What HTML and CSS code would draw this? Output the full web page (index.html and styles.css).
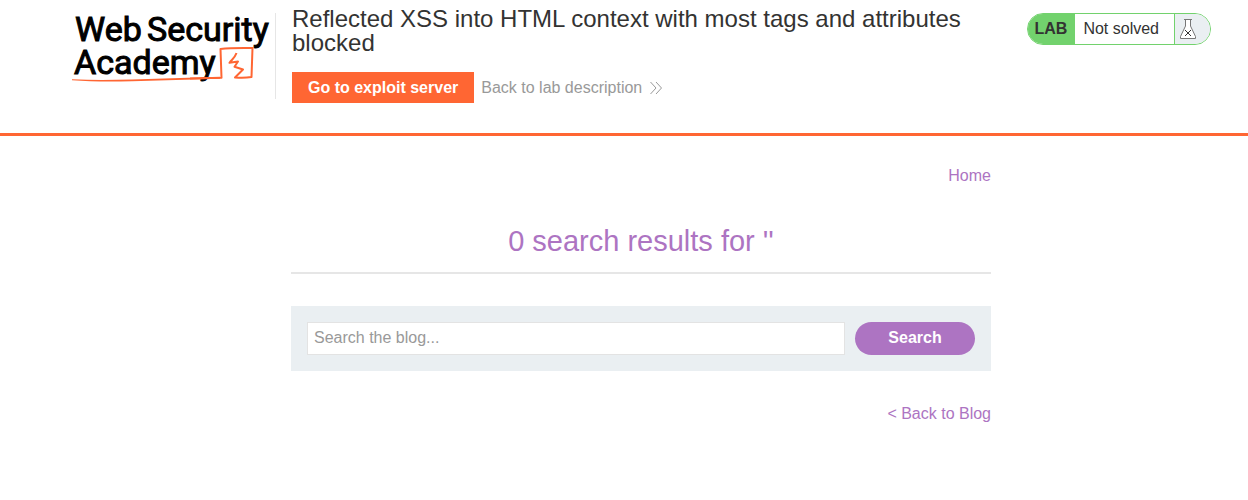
FILE: index.html
```html
<!DOCTYPE html>
<html lang="en">
<head>
<meta charset="utf-8">
<meta name="viewport" content="width=device-width, initial-scale=1">
<title>Reflected XSS into HTML context with most tags and attributes blocked</title>
<link rel="stylesheet" href="styles.css">
</head>
<body>
<header class="lab-header">
  <a class="logo" href="#" aria-label="Web Security Academy">
    <svg class="logo-art" viewBox="0 0 204 86" aria-hidden="true">
      <g class="logo-text">
        <text x="3" y="28">Web</text>
        <text x="75" y="28">Security</text>
        <text x="2" y="61">Academy</text>
      </g>
      <path class="logo-underline" d="M0 66.200C20 67.200 40 67 60 66.400L148 63.800V65.800L60 68.200C38 68.600 18 68.600 0 67.200Z"/>
      <path class="logo-mark" d="M118 65.500L149.500 64.700L148.500 36C160 34.800 170 35.200 180.500 35L179.500 64C174 65 169 65 163 64.500L171 56.500L162.500 53.800L166 48.500L157.500 49.800C160 46.500 163 44.500 164.500 40"/>
    </svg>
  </a>
  <div class="title-area">
    <h1 class="lab-title">Reflected XSS into HTML context with most tags and attributes blocked</h1>
    <div class="lab-links">
      <button class="exploit-button" type="button">Go to exploit server</button>
      <a class="back-link" href="#">Back to lab description
        <svg class="chevrons" viewBox="0 0 12 14" aria-hidden="true"><path d="M0.500 1L6 7L0.500 13M6 1L11.500 7L6 13"/></svg>
      </a>
    </div>
  </div>
  <div class="lab-status">
    <span class="status-tag">LAB</span>
    <span class="status-text">Not solved</span>
    <span class="status-icon">
      <svg class="flask" viewBox="0 0 18 22" aria-hidden="true">
        <path class="flask-body" d="M5 1.500H13M6.500 1.500V8L1.500 18.500V20.500H16.500V18.500L11.500 8V1.500"/>
        <path class="flask-cross" d="M6 12L12 18M12 12L6 18"/>
      </svg>
    </span>
  </div>
</header>
<main class="page">
  <nav class="page-nav"><a href="#">Home</a></nav>
  <h2 class="results-title">0 search results for ''</h2>
  <form class="search">
    <input class="search-input" type="text" placeholder="Search the blog..." aria-label="Search the blog">
    <button class="search-button" type="submit">Search</button>
  </form>
  <div class="page-nav"><a href="#">&lt; Back to Blog</a></div>
</main>
</body>
</html>
```

FILE: styles.css
```css
* {
  box-sizing: border-box;
}

body {
  margin: 0;
  background: #fff;
  color: #333332;
  font: 16px/20px "Liberation Sans", Arial, sans-serif;
}

a {
  color: #ad74c2;
  text-decoration: none;
}

button,
input {
  font: inherit;
}

.lab-header {
  display: grid;
  grid-template-columns: 204px 1fr auto;
  column-gap: 16px;
  align-items: start;
  padding: 7px 37px 30px 72px;
  border-bottom: 3px solid #ff6633;
}

.logo {
  margin-top: 6px;
  border-right: 1px solid #e6e6e6;
}

.logo-art {
  display: block;
  width: 204px;
  height: 86px;
  overflow: visible;
}

.logo-text {
  fill: #000;
  stroke: #000;
  stroke-width: 1px;
  font: 34px Roboto, "Liberation Sans", sans-serif;
}

.logo-underline {
  fill: #ff6633;
}

.logo-mark {
  fill: none;
  stroke: #ff6633;
  stroke-width: 2px;
  stroke-linejoin: round;
}

.lab-title {
  margin: 0 0 17px;
  font-size: 24px;
  line-height: 24px;
  font-weight: 400;
}

.lab-links {
  display: flex;
  align-items: center;
  gap: 7px;
}

.exploit-button {
  height: 31px;
  padding: 0 16px;
  border: 0;
  background: #ff6633;
  color: #fff;
  font-weight: 700;
}

.back-link {
  display: flex;
  align-items: center;
  gap: 8px;
  color: #999;
}

.chevrons {
  width: 12px;
  height: 14px;
  fill: none;
  stroke: #999;
  stroke-width: 1px;
}

.lab-status {
  display: flex;
  height: 32px;
  margin: 6px 0 0 20px;
  overflow: hidden;
  border: 1px solid #72d26d;
  border-radius: 16px;
  line-height: 30px;
}

.status-tag {
  padding: 0 8px 0 7px;
  background: #72d26d;
  font-weight: 700;
}

.status-text {
  padding: 0 15px 0 8px;
}

.status-icon {
  display: flex;
  align-items: center;
  width: 36px;
  padding-left: 4px;
  border-left: 1px solid #72d26d;
  background: #eaeff2;
}

.flask {
  width: 18px;
  height: 22px;
  fill: none;
}

.flask-body {
  fill: #fff;
  stroke: #777;
  stroke-width: 1px;
}

.flask-cross {
  stroke: #333;
  stroke-width: 1px;
}

.page {
  max-width: 734px;
  margin: 0 auto;
  padding: 30px 0 30px 34px;
}

.page-nav {
  text-align: right;
}

.results-title {
  margin: 36px 0 32px;
  padding-bottom: 12px;
  border-bottom: 2px solid #e6e6e6;
  color: #ad74c2;
  font-size: 29px;
  line-height: 38px;
  font-weight: 400;
  text-align: center;
}

.search {
  display: flex;
  gap: 10px;
  margin-bottom: 33px;
  padding: 16px;
  background: #eaeff2;
}

.search-input {
  flex: 1;
  min-width: 0;
  height: 33px;
  padding: 0 6px 2px;
  border: 1px solid #e3e3e3;
  background: #fff;
  color: #333332;
}

.search-input::placeholder {
  color: #999;
}

.search-button {
  width: 120px;
  height: 33px;
  padding: 0 0 2px;
  border: 0;
  border-radius: 17px;
  background: #ad74c2;
  color: #fff;
  font-weight: 700;
}
```
